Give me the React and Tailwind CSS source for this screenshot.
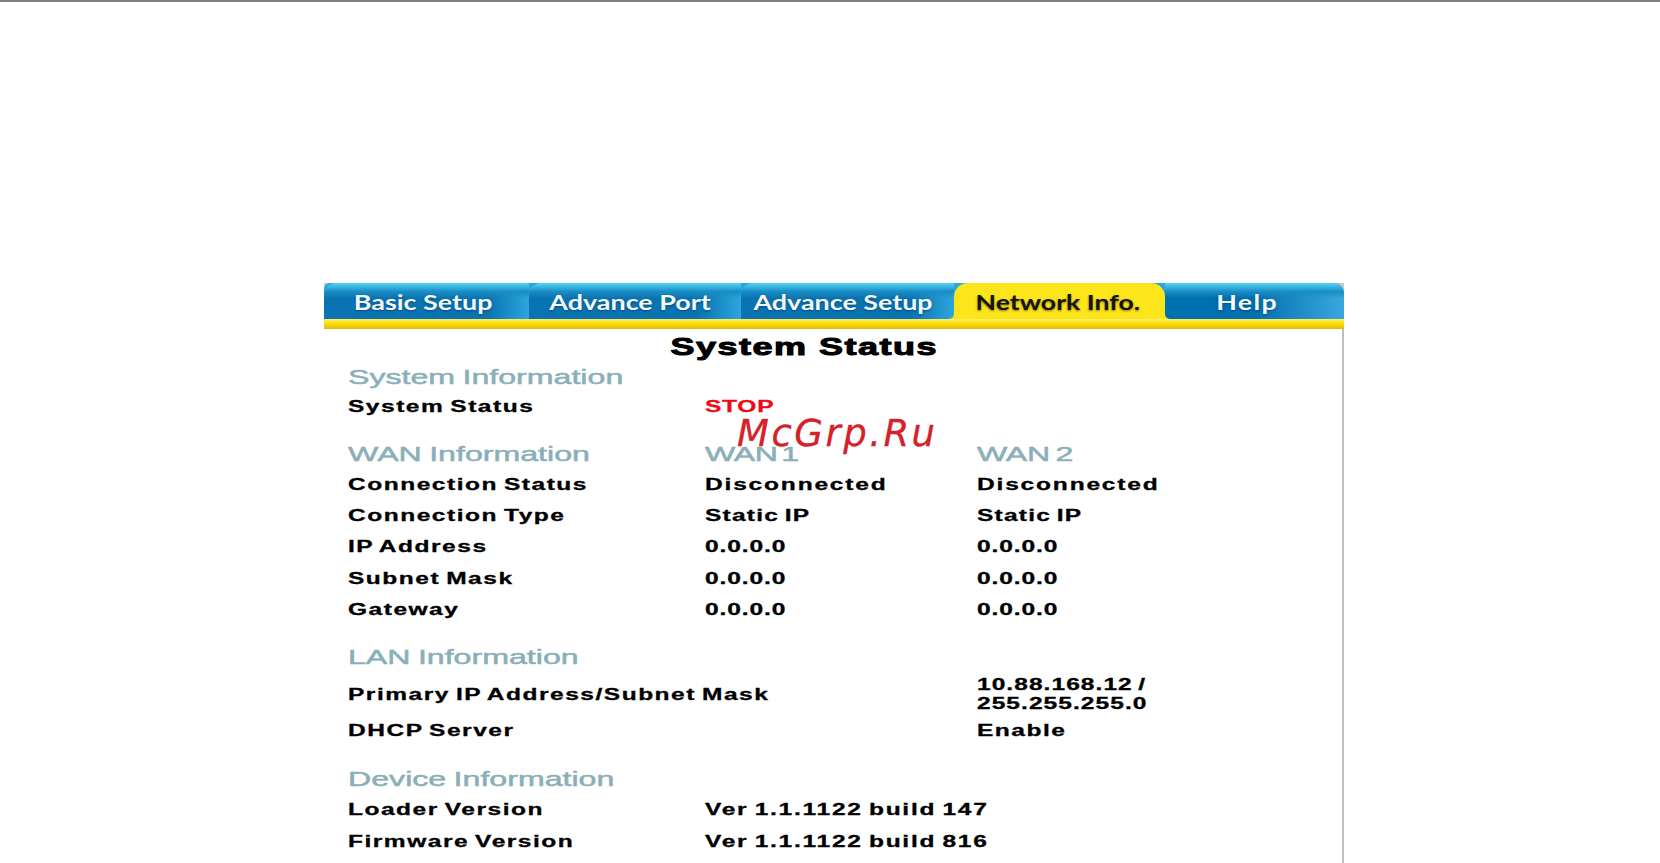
function Tab({ label, className, textClass = "" }) {
  return (
    <div className={`flex h-[36px] items-center justify-center rounded-tl-[12px] pt-[2px] font-["Lato",sans-serif] text-[21px] font-bold text-[#f2f8fb] [text-shadow:0_1px_2px_#004a78] ${className}`}>
      <span className={`inline-block scale-x-[1.28] ${textClass}`}>{label}</span>
    </div>
  );
}

function Wide({ children, className = "" }) {
  return <span className={`inline-block origin-left whitespace-pre scale-x-[1.53] ${className}`}>{children}</span>;
}

function Heading({ children, second, third, className = "" }) {
  return (
    <div className={`grid h-[28px] grid-cols-[357px_272px_1fr] items-center text-[21px] text-[#8aafb8] [-webkit-text-stroke:0.5px_#8aafb8] ${className}`}>
      <div><Wide className="scale-x-[1.5] [word-spacing:-1px]">{children}</Wide></div>
      <div><Wide className="scale-x-[1.5] tracking-[-0.3px] [word-spacing:-3px]">{second}</Wide></div>
      <div><Wide className="scale-x-[1.5] tracking-[-0.2px] [word-spacing:-2px]">{third}</Wide></div>
    </div>
  );
}

function Row({ a, b, c, bClass = "text-black", bWide = "", cWide = "", className = "h-[31.2px]" }) {
  return (
    <div className={`grid grid-cols-[357px_272px_1fr] items-center text-[16px] font-bold leading-[19px] tracking-[1px] text-black [-webkit-text-stroke:0.3px_currentColor] [word-spacing:-1.5px] ${className}`}>
      <div><Wide>{a}</Wide></div>
      <div className={bClass}><Wide className={bWide}>{b}</Wide></div>
      <div><Wide className={cWide}>{c}</Wide></div>
    </div>
  );
}

const band = "bg-[linear-gradient(180deg,#55d2f2_0,#3ab8e6_10%,#1a8cc4_24%,#0a78b400_42%),linear-gradient(90deg,#0a74b2_0,#0a74b2_80%,#2ba6dc_100%)]";

export default function App() {
  return (
    <div className='relative h-[863px] w-[1660px] overflow-hidden bg-white font-["Liberation_Sans",Arial,sans-serif]'>
      <div className="h-[2px] bg-[#808080]" />
      <div className="ml-[324px] mt-[281px] w-[1020px]">
        <div className="h-[36px] bg-[#c6cacc]">
          <div className="flex h-[36px] rounded-tr-[10px] rounded-tl-[6px] bg-[#2ba6dc]">
            <Tab label="Basic Setup" textClass="-translate-x-[3px]" className={`w-[205px] ${band}`} />
            <Tab label="Advance Port" textClass="-translate-x-[5px]" className={`w-[212px] ${band}`} />
            <Tab label="Advance Setup" textClass="-translate-x-[4px]" className={`w-[213px] ${band}`} />
            <div className='relative flex h-[36px] w-[211px] items-center justify-center rounded-t-[14px] bg-[#fde51c] pt-[2px] font-["Lato",sans-serif] text-[21px] font-bold text-[#14140a] [text-shadow:0_1px_2px_#8a7a00]'>
              <span className="inline-block -translate-x-[2px] scale-x-[1.27]">Network Info.</span>
              <div className="absolute bottom-0 left-[-5px] h-[5px] w-[5px] bg-[#fde51c]">
                <div className="h-[5px] w-[5px] rounded-br-[5px] bg-[#2ba6dc]" />
              </div>
              <div className="absolute bottom-0 right-[-5px] h-[5px] w-[5px] bg-[#fde51c]">
                <div className="h-[5px] w-[5px] rounded-bl-[5px] bg-[#0070ae]" />
              </div>
            </div>
            <Tab label="Help" textClass="-translate-x-[7px] tracking-[1px]" className="w-[179px] rounded-tl-none rounded-tr-[10px] bg-[linear-gradient(180deg,#55d2f2_0,#3ab8e6_10%,#1a8cc4_24%,#0a78b400_42%),linear-gradient(90deg,#0070ae_0,#0070ae_50%,#3aa8de_100%)]" />
          </div>
        </div>
        <div className="h-[10px] bg-[linear-gradient(180deg,#fff06a_0,#fbe01a_35%,#e0bb00_100%)]" />
        <div className="h-[544px] border-r-2 border-[#b9c2c2] pl-[24px]">
          <div className="flex h-[34px] items-center justify-center pt-[1px] pr-[82px] text-[24px] font-bold tracking-[1px] text-black [-webkit-text-stroke:1px_#000]">
            <span className="inline-block scale-x-[1.5]">System Status</span>
          </div>
          <Heading className="-mt-[2px]">System Information</Heading>
          <Row a="System Status" b="STOP" bClass="text-[#f00a14]" bWide="tracking-[0.5px]" className="h-[35px]" />
          <Heading className="mt-[14px]" second="WAN 1" third="WAN 2">WAN Information</Heading>
          <Row a="Connection Status" b="Disconnected" c="Disconnected" bWide="tracking-[1.2px]" cWide="tracking-[1.2px]" className="mt-[2px] h-[32.2px]" />
          <Row a="Connection Type" b="Static IP" c="Static IP" bWide="tracking-[0.8px]" cWide="tracking-[0.8px]" />
          <Row a="IP Address" b="0.0.0.0" c="0.0.0.0" bWide="tracking-[0.6px]" cWide="tracking-[0.6px]" />
          <Row a="Subnet Mask" b="0.0.0.0" c="0.0.0.0" bWide="tracking-[0.6px]" cWide="tracking-[0.6px]" />
          <Row a="Gateway" b="0.0.0.0" c="0.0.0.0" bWide="tracking-[0.6px]" cWide="tracking-[0.6px]" />
          <Heading className="mt-[16px]">LAN Information</Heading>
          <Row a="Primary IP Address/Subnet Mask" c={"10.88.168.12 /\n255.255.255.0"} cWide="tracking-[0.7px]" className="mt-[2px] h-[47px]" />
          <Row a="DHCP Server" c="Enable" className="h-[25px]" />
          <Heading className="mt-[20px]">Device Information</Heading>
          <Row a="Loader Version" b="Ver 1.1.1122 build 147" bWide="tracking-[1.15px]" className="mt-[3px] h-[32px]" />
          <Row a="Firmware Version" b="Ver 1.1.1122 build 816" bWide="tracking-[1.15px]" className="h-[32px]" />
        </div>
      </div>
      <div className="absolute left-[737px] top-[410px] font-['DejaVu_Sans',sans-serif] text-[37px] italic leading-[48px] tracking-[2.5px] text-[#d4212a] [-webkit-text-stroke:0.3px_#d4212a]">
        McGrp.Ru
      </div>
    </div>
  );
}
